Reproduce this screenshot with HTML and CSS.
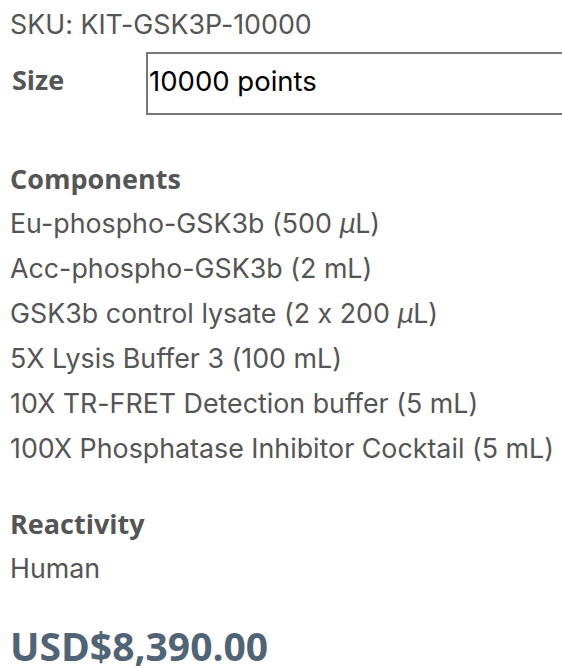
FILE: index.html
```html
<!DOCTYPE html>
<html lang="en">
<head>
<meta charset="utf-8">
<title>KIT-GSK3P-10000</title>
<link rel="stylesheet" href="styles.css">
</head>
<body>
<div class="product">
  <div class="sku">SKU: KIT-GSK3P-10000</div>
  <div class="size-row">
    <label class="size-label" for="size">Size</label>
    <input class="size-input" id="size" type="text" value="10000 points">
  </div>
  <div class="section components">
    <div class="section-title">Components</div>
    <div class="item">Eu-phospho-GSK3b (500 <i>µ</i>L)</div>
    <div class="item">Acc-phospho-GSK3b (2 mL)</div>
    <div class="item">GSK3b control lysate (2 x 200 <i>µ</i>L)</div>
    <div class="item">5X Lysis Buffer 3 (100 mL)</div>
    <div class="item">10X TR-FRET Detection buffer (5 mL)</div>
    <div class="item">100X Phosphatase Inhibitor Cocktail (5 mL)</div>
  </div>
  <div class="section reactivity">
    <div class="section-title">Reactivity</div>
    <div class="item">Human</div>
  </div>
  <div class="price">USD$8,390.00</div>
</div>
</body>
</html>
```
FILE: styles.css
```css
html, body {
  margin: 0;
  padding: 0;
  background: #ffffff;
  overflow: hidden;
}
body {
  font-family: "Inter", "Open Sans", sans-serif;
  font-feature-settings: "calt" 0;
  font-size: 26.8px;
  line-height: 45px;
  color: #555555;
}
.product {
  display: flex;
  flex-direction: column;
  padding: 2px 0 0 10px;
}
.sku {
  line-height: 45px;
}
.size-row {
  display: flex;
  align-items: flex-start;
  margin-top: 5px;
  margin-left: 2px;
}
.size-label {
  width: 134px;
  flex: none;
  font-family: "Open Sans", sans-serif;
  font-size: 27px;
  font-weight: 700;
  padding-top: 5px;
  line-height: 45px;
}
.size-input {
  flex: none;
  box-sizing: border-box;
  width: 420px;
  height: 63px;
  margin: 0;
  border: 2px solid #777777;
  border-right: none;
  border-radius: 0;
  padding: 0 0 6px 1px;
  font-family: "Inter", "Open Sans", sans-serif;
  font-feature-settings: "calt" 0;
  font-size: 27.5px;
  color: #000000;
  background: #ffffff;
  outline: none;
}
.section {
  display: flex;
  flex-direction: column;
}
.components {
  margin-top: 41px;
}
.reactivity {
  margin-top: 30px;
}
.section-title {
  font-family: "Open Sans", sans-serif;
  font-size: 27px;
  font-weight: 700;
}
.item i {
  font-style: italic;
}
.price {
  margin-top: 34px;
  font-family: "Open Sans", sans-serif;
  font-size: 39px;
  line-height: 42px;
  font-weight: 700;
  color: #516475;
}
```
